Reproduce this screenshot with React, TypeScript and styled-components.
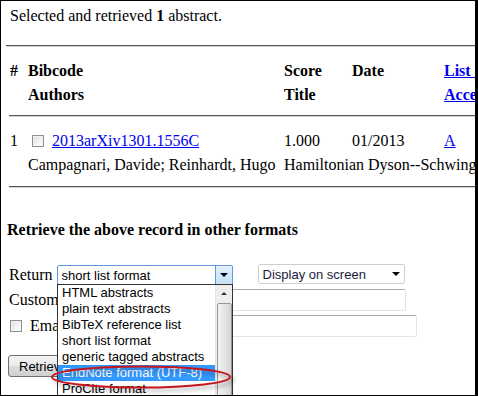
import React from 'react';
import styled, { createGlobalStyle } from 'styled-components';

const Global = createGlobalStyle`
  body {
    margin: 0;
    background: #fff;
    font-family: "Liberation Serif", "Times New Roman", serif;
    font-size: 16px;
    color: #000;
  }
`;

const Frame = styled.div`
  position: relative;
  box-sizing: border-box;
  width: 478px;
  height: 396px;
  border: 1px solid #000;
  border-right-width: 3px;
  overflow: hidden;
  padding: 6px 0 0 5px;
  background: #fff;
`;

const Intro = styled.p`
  margin: 0 0 0 4px;
  line-height: 18px;
  white-space: nowrap;
`;

const Rule = styled.hr<{ $indent?: number; $top: number }>`
  margin: ${p => p.$top}px 0 0 ${p => p.$indent ?? 0}px;
  width: 600px;
  height: 0;
  border: 0;
  border-top: 1px solid #555;
  border-bottom: 1px solid #d4d4d4;
`;

const Table = styled.div<{ $top: number }>`
  display: grid;
  grid-template-columns: 18px 256px 68px 92px 200px;
  grid-auto-rows: 24px;
  margin: ${p => p.$top}px 0 0 4px;
  width: 700px;
  line-height: 24px;
  white-space: nowrap;
`;

const Cell = styled.div<{ $bold?: boolean; $span?: number }>`
  display: flex;
  align-items: center;
  font-weight: ${p => (p.$bold ? 'bold' : 'normal')};
  grid-column: ${p => (p.$span ? `span ${p.$span}` : 'auto')};
`;

const Link = styled.a<{ $bold?: boolean }>`
  color: #0000ee;
  text-decoration: underline;
  font-weight: ${p => (p.$bold ? 'bold' : 'normal')};
`;

const Check = styled.span<{ $ml?: number }>`
  display: inline-block;
  box-sizing: border-box;
  width: 12px;
  height: 12px;
  margin: 0 8px 0 ${p => p.$ml ?? 0}px;
  border: 1px solid #8e8f8f;
  background: linear-gradient(135deg, #dcdcdc 0%, #f4f4f4 60%, #ffffff 100%);
  box-shadow: inset 0 0 0 1px #f4f4f4;
`;

const Heading = styled.h3`
  margin: 33px 0 0 1px;
  font-size: 16px;
  line-height: 18px;
  font-weight: bold;
`;

const FormRow = styled.div<{ $top: number; $h: number }>`
  display: flex;
  align-items: center;
  height: ${p => p.$h}px;
  margin-top: ${p => p.$top}px;
  padding-left: 3px;
  white-space: nowrap;
`;

const Label = styled.span`
  margin-right: 4px;
`;

const Select = styled.div<{ $w: number; $open?: boolean; $gap?: number }>`
  position: relative;
  box-sizing: border-box;
  width: ${p => p.$w}px;
  height: 20px;
  margin-left: ${p => p.$gap ?? 0}px;
  margin-top: ${p => (p.$gap ? -2 : 0)}px;
  display: flex;
  align-items: center;
  padding-left: 4px;
  font-family: "Liberation Sans", Arial, sans-serif;
  font-size: 13px;
  color: ${p => (p.$open ? '#000' : '#1c1c3c')};
  border: 1px solid ${p => (p.$open ? '#5d9bd8' : '#cfcfcf')};
  border-radius: 2px;
  background: #fff;
`;

const ArrowBox = styled.span<{ $open?: boolean }>`
  position: absolute;
  right: 0;
  top: 0;
  bottom: 0;
  width: 16px;
  display: flex;
  align-items: center;
  justify-content: center;
  border-left: 1px solid ${p => (p.$open ? '#5d9bd8' : 'transparent')};
  background: ${p => (p.$open ? 'linear-gradient(#e4f1fc, #c5e1f8)' : 'transparent')};
  &::after {
    content: '';
    border-left: 4px solid transparent;
    border-right: 4px solid transparent;
    border-top: 4px solid #000;
  }
`;

const TextBox = styled.div<{ $w: number }>`
  box-sizing: border-box;
  width: ${p => p.$w}px;
  height: 22px;
  border: 1px solid #e0e5ea;
  border-top-color: #abadb3;
  border-radius: 2px;
  background: #fff;
`;

const Button = styled.div`
  box-sizing: border-box;
  width: 80px;
  height: 22px;
  margin-left: -1px;
  padding-left: 10px;
  display: flex;
  align-items: center;
  font-family: "Liberation Sans", Arial, sans-serif;
  font-size: 13px;
  border: 1px solid #707070;
  border-radius: 3px;
  background: linear-gradient(#f2f2f2 0%, #ebebeb 50%, #dddddd 51%, #cfcfcf 100%);
`;

const List = styled.div`
  position: absolute;
  left: 56px;
  top: 283px;
  width: 176px;
  height: 130px;
  box-sizing: border-box;
  border: 1px solid #333;
  background: #fff;
  font-family: "Liberation Sans", Arial, sans-serif;
  font-size: 13px;
  display: flex;
`;

const Options = styled.div`
  flex: 1;
`;

const Option = styled.div<{ $active?: boolean }>`
  height: 16px;
  line-height: 16px;
  padding-left: 4px;
  white-space: nowrap;
  color: ${p => (p.$active ? '#fff' : '#000')};
  background: ${p => (p.$active ? '#3399ff' : 'transparent')};
`;

const Scroll = styled.div`
  width: 16px;
  background: #eeeeee;
  border-left: 1px solid #e4e4e4;
  display: flex;
  flex-direction: column;
  align-items: center;
`;

const ScrollUp = styled.div`
  height: 17px;
  display: flex;
  align-items: center;
  &::after {
    content: '';
    border-left: 3px solid transparent;
    border-right: 3px solid transparent;
    border-bottom: 3px solid #333;
  }
`;

const Thumb = styled.div`
  box-sizing: border-box;
  width: 15px;
  flex: 1;
  margin-top: 1px;
  border: 1px solid #979797;
  border-radius: 2px;
  background: linear-gradient(90deg, #f3f3f3, #e2e2e2 60%, #d4d4d4);
`;

const Mark = styled.svg`
  position: absolute;
  left: 46px;
  top: 361px;
  overflow: visible;
`;

const formats = [
  'HTML abstracts',
  'plain text abstracts',
  'BibTeX reference list',
  'short list format',
  'generic tagged abstracts',
  'EndNote format (UTF-8)',
  'ProCite format',
];

export default function App() {
  return (
    <>
      <Global />
      <Frame>
        <Intro>Selected and retrieved <b>1</b> abstract.</Intro>
        <Rule $top={20} />
        <Table $top={12}>
          <Cell $bold>#</Cell>
          <Cell $bold>Bibcode</Cell>
          <Cell $bold>Score</Cell>
          <Cell $bold>Date</Cell>
          <Cell><Link $bold href="#">List of Links</Link></Cell>
          <Cell />
          <Cell $bold>Authors</Cell>
          <Cell $bold>Title</Cell>
          <Cell />
          <Cell><Link $bold href="#">Access Control Help</Link></Cell>
        </Table>
        <Rule $indent={3} $top={8} />
        <Table $top={12}>
          <Cell>1</Cell>
          <Cell><Check $ml={4} /><Link href="#">2013arXiv1301.1556C</Link></Cell>
          <Cell>1.000</Cell>
          <Cell>01/2013</Cell>
          <Cell><Link href="#">A</Link></Cell>
          <Cell />
          <Cell>Campagnari, Davide; Reinhardt, Hugo</Cell>
          <Cell $span={3}>Hamiltonian Dyson--Schwinger equations in QCD</Cell>
        </Table>
        <Rule $indent={3} $top={9} />
        <Heading>Retrieve the above record in other formats</Heading>
        <FormRow $top={25} $h={22}>
          <Label>Return</Label>
          <Select $w={176} $open>short list format<ArrowBox $open /></Select>
          <Select $w={147} $gap={25}>Display on screen<ArrowBox /></Select>
        </FormRow>
        <FormRow $top={3} $h={22}>
          <Label>Custom format:</Label>
          <TextBox $w={292} />
        </FormRow>
        <FormRow $top={4} $h={22}>
          <Check $ml={1} />
          <Label>Email to:</Label>
          <TextBox $w={324} />
        </FormRow>
        <FormRow $top={18} $h={22}>
          <Button>Retrieve</Button>
        </FormRow>
        <List>
          <Options>
            {formats.map(f => (
              <Option key={f} $active={f.startsWith('EndNote')}>{f}</Option>
            ))}
          </Options>
          <Scroll>
            <ScrollUp />
            <Thumb />
          </Scroll>
        </List>
        <Mark width="190" height="32" viewBox="0 0 190 32">
          <defs>
            <filter id="shade" x="-10%" y="-50%" width="130%" height="250%">
              <feDropShadow dx="3" dy="3" stdDeviation="2" floodColor="#000" floodOpacity="0.35" />
            </filter>
          </defs>
          <ellipse cx="94" cy="15" rx="89" ry="10.5" fill="none" stroke="#c4161c" strokeWidth="2" filter="url(#shade)" />
        </Mark>
      </Frame>
    </>
  );
}
